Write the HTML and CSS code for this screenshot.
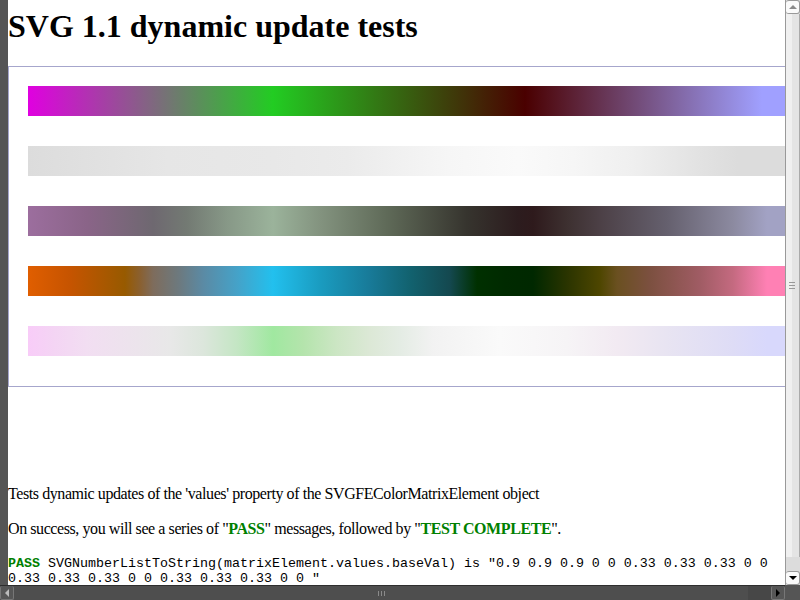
FILE: index.html
```html
<!DOCTYPE html>
<html>
<head>
<meta charset="utf-8">
<title>SVG 1.1 dynamic update tests</title>
<link rel="stylesheet" href="styles.css">
</head>
<body>
<div class="window">
  <div class="viewport">
    <div class="gutter"></div>
    <div class="page">
      <h1 class="title">SVG 1.1 dynamic update tests</h1>
      <div class="stage">
        <div class="frame">
          <div class="bar bar-1"></div>
          <div class="bar bar-2"></div>
          <div class="bar bar-3"></div>
          <div class="bar bar-4"></div>
          <div class="bar bar-5"></div>
        </div>
      </div>
      <p class="desc">Tests dynamic updates of the 'values' property of the SVGFEColorMatrixElement object</p>
      <p class="desc">On success, you will see a series of "<span class="pass">PASS</span>" messages, followed by "<span class="pass">TEST COMPLETE</span>".</p>
      <div class="console"><span class="pass">PASS</span> SVGNumberListToString(matrixElement.values.baseVal) is "0.9 0.9 0.9 0 0 0.33 0.33 0.33 0 0 0.33 0.33 0.33 0 0 0.33 0.33 0.33 0 0 "</div>
    </div>
  </div>
  <div class="vscroll">
    <div class="vbtn vbtn-up"><span class="tri tri-up"></span></div>
    <div class="vthumb"><span class="vgrip"></span></div>
    <div class="vtrack"></div>
    <div class="vbtn vbtn-down"><span class="tri tri-down"></span></div>
  </div>
  <div class="hscroll">
    <div class="hbtn hbtn-left"><span class="tri tri-left"></span></div>
    <div class="hthumb"><span class="hgrip"></span></div>
    <div class="htrack"></div>
    <div class="hbtn hbtn-right"><span class="tri tri-right"></span></div>
  </div>
  <div class="corner"></div>
</div>
</body>
</html>
```

FILE: styles.css
```css
html, body {
  margin: 0;
  padding: 0;
  overflow: hidden;
  background: #fff;
}

.window {
  display: grid;
  grid-template-columns: 785px 15px;
  grid-template-rows: 585px 15px;
  width: 800px;
  height: 600px;
}

.viewport {
  display: flex;
  overflow: hidden;
  background: #fff;
}

.gutter {
  flex: 0 0 8px;
  background: #555;
}

.page {
  flex: 1 1 auto;
  min-width: 0;
  padding: 8px 8px 0 0;
  font-family: "Liberation Serif", "Times New Roman", serif;
  font-size: 16px;
  color: #000;
}

.title {
  margin: 0 0 21.44px 0;
  font-size: 32px;
  font-weight: bold;
}

.stage {
  height: 402px;
}

.frame {
  width: 830px;
  height: 300px;
  border: 1px solid #a6a6cc;
  padding: 19px 0 0 19px;
  display: flex;
  flex-direction: column;
  gap: 30px;
}

.bar {
  width: 800px;
  height: 30px;
  flex: 0 0 30px;
}

.bar-1 {
  background: linear-gradient(to right,
    #e000e0 0px, #22cc22 245px, #4a0000 497px, #a0a0ff 734px, #a0a0ff 800px);
}

.bar-2 {
  background: linear-gradient(to right,
    #dcdcdc 0px, #e6e6e6 140px, #e8e8e8 245px, #ebebeb 320px, #f6f6f6 420px,
    #fafafa 490px, #f6f6f6 545px, #efefef 605px, #e2e2e2 672px, #dcdcdc 710px, #dcdcdc 800px);
}

.bar-3 {
  background: linear-gradient(to right,
    #9c6e9e 0px, #8a6488 59px, #6e6870 125px, #737a73 159px, #879887 199px,
    #9bb39b 245px, #83937f 292px, #5f6a58 359px, #36342e 439px, #2c1c1e 490px,
    #2e1a1c 505px, #3d3030 539px, #4c4046 572px, #65606e 639px, #8c8aa0 705px,
    #a2a2c4 739px, #a2a2c4 800px);
}

.bar-4 {
  background: linear-gradient(to right,
    #e05e00 0px, #c65400 42px, #975a00 97px, #8a6030 112px, #7e6c5c 125px, #6c7a80 152px,
    #5b8aa4 175px, #45a2c8 209px, #22c0ee 245px, #1a9cc0 292px, #187a98 342px,
    #12626f 382px, #14484f 422px, #003000 449px, #002a00 477px, #002800 505px,
    #2a3400 539px, #4e4600 572px, #6a5020 589px, #7c5040 622px, #a05c64 672px,
    #c46a80 705px, #ff80b4 739px, #ff80b4 800px);
}

.bar-5 {
  background: linear-gradient(to right,
    #f8ccf8 0px, #f4d4f4 25px, #f2def2 59px, #ece4ec 109px, #e8e8e8 142px,
    #dce6dc 175px, #c4e6c4 209px, #a0e8a0 245px, #b4e4ac 275px, #cce6c4 309px,
    #dce8d6 342px, #e4ece4 372px, #f2f2f2 405px, #fafafa 472px, #f6f4f6 539px,
    #f2eaf2 589px, #e8e4f2 639px, #dedcf6 705px, #d8d8fc 739px, #d8d8fc 800px);
}

.desc {
  margin: 16px 0;
  line-height: 19px;
  letter-spacing: -0.42px;
}

.pass {
  color: #008000;
  font-weight: bold;
}

.console {
  padding-top: 2px;
  font-family: "Liberation Mono", "Courier New", monospace;
  font-size: 13.33px;
  letter-spacing: 0;
}

/* vertical scrollbar */
.vscroll {
  display: flex;
  flex-direction: column;
  background: #dcdcdc;
  border-left: 1px solid #999;
}

.vbtn {
  flex: 0 0 14px;
  box-sizing: border-box;
  background: #fafafa;
  border: 1px solid #999;
  border-left: none;
  border-radius: 3px;
  display: flex;
  align-items: center;
  justify-content: center;
}

.vthumb {
  flex: 1 1 auto;
  box-sizing: border-box;
  border-right: 1px solid #aaa;
  background: linear-gradient(to right, #f0f0f0 0px, #f0f0f0 6px, #e4e4e4 6px, #e4e4e4 100%);
  display: flex;
  align-items: center;
  justify-content: center;
}

.vgrip {
  display: block;
  width: 6px;
  height: 5px;
  margin-left: -2px;
  border-top: 1px solid #999;
  border-bottom: 1px solid #999;
  background: linear-gradient(#999, #999) center / 100% 1px no-repeat;
}

.vtrack {
  flex: 0 0 14px;
  background: #dcdcdc;
}

/* horizontal scrollbar */
.hscroll {
  display: flex;
  background: #454545;
  border-top: 1px solid #2e2e2e;
}

.hbtn {
  flex: 0 0 14px;
  box-sizing: border-box;
  background: #565656;
  border: 1px solid #777;
  border-top: none;
  border-radius: 2px;
  display: flex;
  align-items: center;
  justify-content: center;
}

.hthumb {
  flex: 0 0 734px;
  background: #4e4e4e;
  display: flex;
  align-items: center;
  justify-content: center;
}

.hgrip {
  display: block;
  width: 5px;
  height: 5px;
  border-left: 1px solid #8a8a8a;
  border-right: 1px solid #8a8a8a;
  background: linear-gradient(#8a8a8a, #8a8a8a) center / 1px 100% no-repeat;
}

.htrack {
  flex: 1 1 auto;
  background: #474747;
}

.corner {
  background: #555;
}

/* arrows */
.tri {
  display: block;
  width: 0;
  height: 0;
}

.tri-up {
  border-left: 4px solid transparent;
  border-right: 4px solid transparent;
  border-bottom: 4px solid #8a8a8a;
}

.tri-down {
  border-left: 4px solid transparent;
  border-right: 4px solid transparent;
  border-top: 4px solid #000;
}

.tri-left {
  border-top: 4px solid transparent;
  border-bottom: 4px solid transparent;
  border-right: 4px solid #bbb;
}

.tri-right {
  border-top: 4px solid transparent;
  border-bottom: 4px solid transparent;
  border-left: 4px solid #000;
}
```
